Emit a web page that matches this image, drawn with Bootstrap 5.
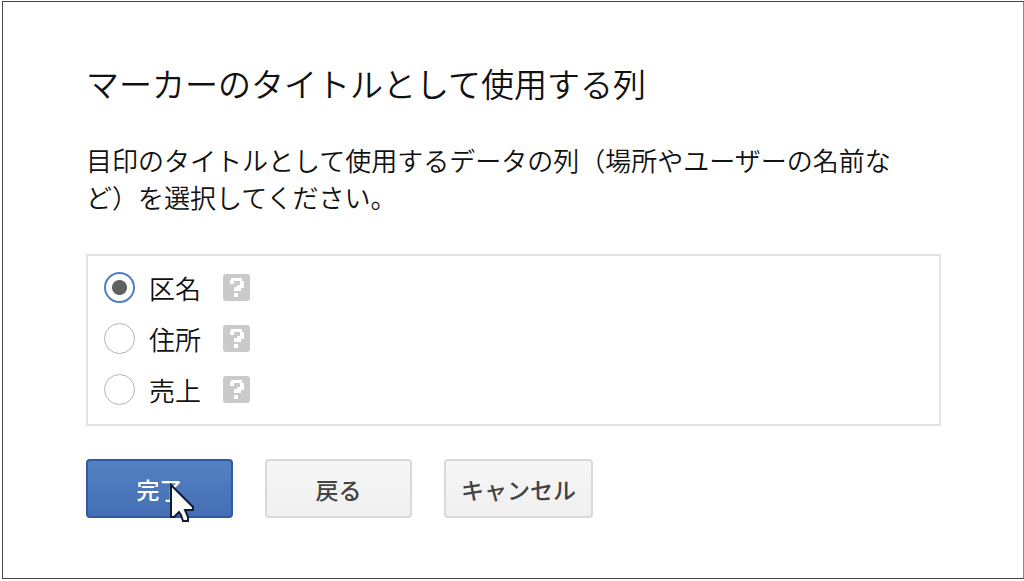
<!DOCTYPE html>
<html lang="ja">
<head>
<meta charset="utf-8">
<meta name="viewport" content="width=device-width, initial-scale=1">
<title>マーカーのタイトルとして使用する列</title>
<link href="https://cdn.jsdelivr.net/npm/bootstrap@5.3.0/dist/css/bootstrap.min.css" rel="stylesheet">
<style>
body { font-family: "Noto Sans CJK JP", sans-serif; font-weight: 350; color: #111; background: #fff; padding: 1px 0 2px 2px; }
.dialog-frame { border: 1px solid #444; border-right-color: #888; padding: 61px 82px 60px 83px; }
.dialog-title { font-size: 33px; line-height: 40px; font-weight: 350; margin-bottom: 38px; }
.dialog-text { font-size: 26px; line-height: 37px; padding-right: 30px; margin-bottom: 39px; }
.choice-box { border: 2px solid #e2e2e2; padding: 6px 16px 9px; }
.choice-row { height: 51px; font-size: 26px; line-height: 48px; }
.choice-row .form-check-input { width: 31px; height: 31px; margin: 0 14px 0 0; border: 1px solid #b4b4b4; background-color: #fff; box-shadow: none; }
.choice-row .form-check-input:checked { border: 2px solid #4d80c4; background-image: radial-gradient(circle, #606060 7px, transparent 8px); background-size: 100% 100%; }
.help-btn { width: 27px; height: 27px; margin-left: 22px; border: 0; border-radius: 3px; background: #cacaca; }
.help-btn svg { display: block; }
.action-bar { gap: 32px; margin-top: 33px; }
.action-btn { min-width: 147px; height: 59px; padding: 0 15px; font-size: 23px; line-height: 54px; font-weight: 500; border: 2px solid #d9d9d9; border-radius: 4px; color: #444; background: linear-gradient(#f6f6f6, #f0f0f0); }
.action-main { color: #fff; border-color: #3059a6; background: linear-gradient(#5381c1, #446fb5); }
.pointer { left: 81px; top: 22px; pointer-events: none; }
</style>
</head>
<body>
<svg class="d-none" aria-hidden="true"><symbol id="help" viewBox="0 0 27 27"><path fill="#fff" d="M8 4h11v3h2v7h-3v3h-7v-4h3v-2h3V7h-6v3H7V6h1zM11 19h4v4h-4z"/></symbol></svg>
<main class="dialog-frame">
  <h1 class="dialog-title">マーカーのタイトルとして使用する列</h1>
  <p class="dialog-text">目印のタイトルとして使用するデータの列（場所やユーザーの名前など）を選択してください。</p>
  <form>
    <div class="choice-box" role="radiogroup" aria-label="列">
      <div class="choice-row d-flex align-items-center">
        <input class="form-check-input flex-shrink-0" type="radio" name="column" id="ward" checked><label for="ward">区名</label>
        <button type="button" class="help-btn p-0" aria-label="ヘルプ"><svg width="27" height="27"><use href="#help"/></svg></button>
      </div>
      <div class="choice-row d-flex align-items-center">
        <input class="form-check-input flex-shrink-0" type="radio" name="column" id="address"><label for="address">住所</label>
        <button type="button" class="help-btn p-0" aria-label="ヘルプ"><svg width="27" height="27"><use href="#help"/></svg></button>
      </div>
      <div class="choice-row d-flex align-items-center">
        <input class="form-check-input flex-shrink-0" type="radio" name="column" id="sales"><label for="sales">売上</label>
        <button type="button" class="help-btn p-0" aria-label="ヘルプ"><svg width="27" height="27"><use href="#help"/></svg></button>
      </div>
    </div>
    <div class="action-bar d-flex flex-wrap">
      <button type="button" class="btn action-btn action-main position-relative">完了
        <svg class="pointer position-absolute" width="28" height="42" viewBox="0 0 28 42" aria-hidden="true"><path d="M2 2v32h3l5-5 2 3 2 6h5v-4l-3-7h8v-3z" fill="#fff" stroke="#111c33" stroke-width="2"/></svg>
      </button>
      <button type="button" class="btn action-btn">戻る</button>
      <button type="button" class="btn action-btn">キャンセル</button>
    </div>
  </form>
</main>
<script src="https://cdn.jsdelivr.net/npm/bootstrap@5.3.0/dist/js/bootstrap.bundle.min.js"></script>
</body>
</html>
